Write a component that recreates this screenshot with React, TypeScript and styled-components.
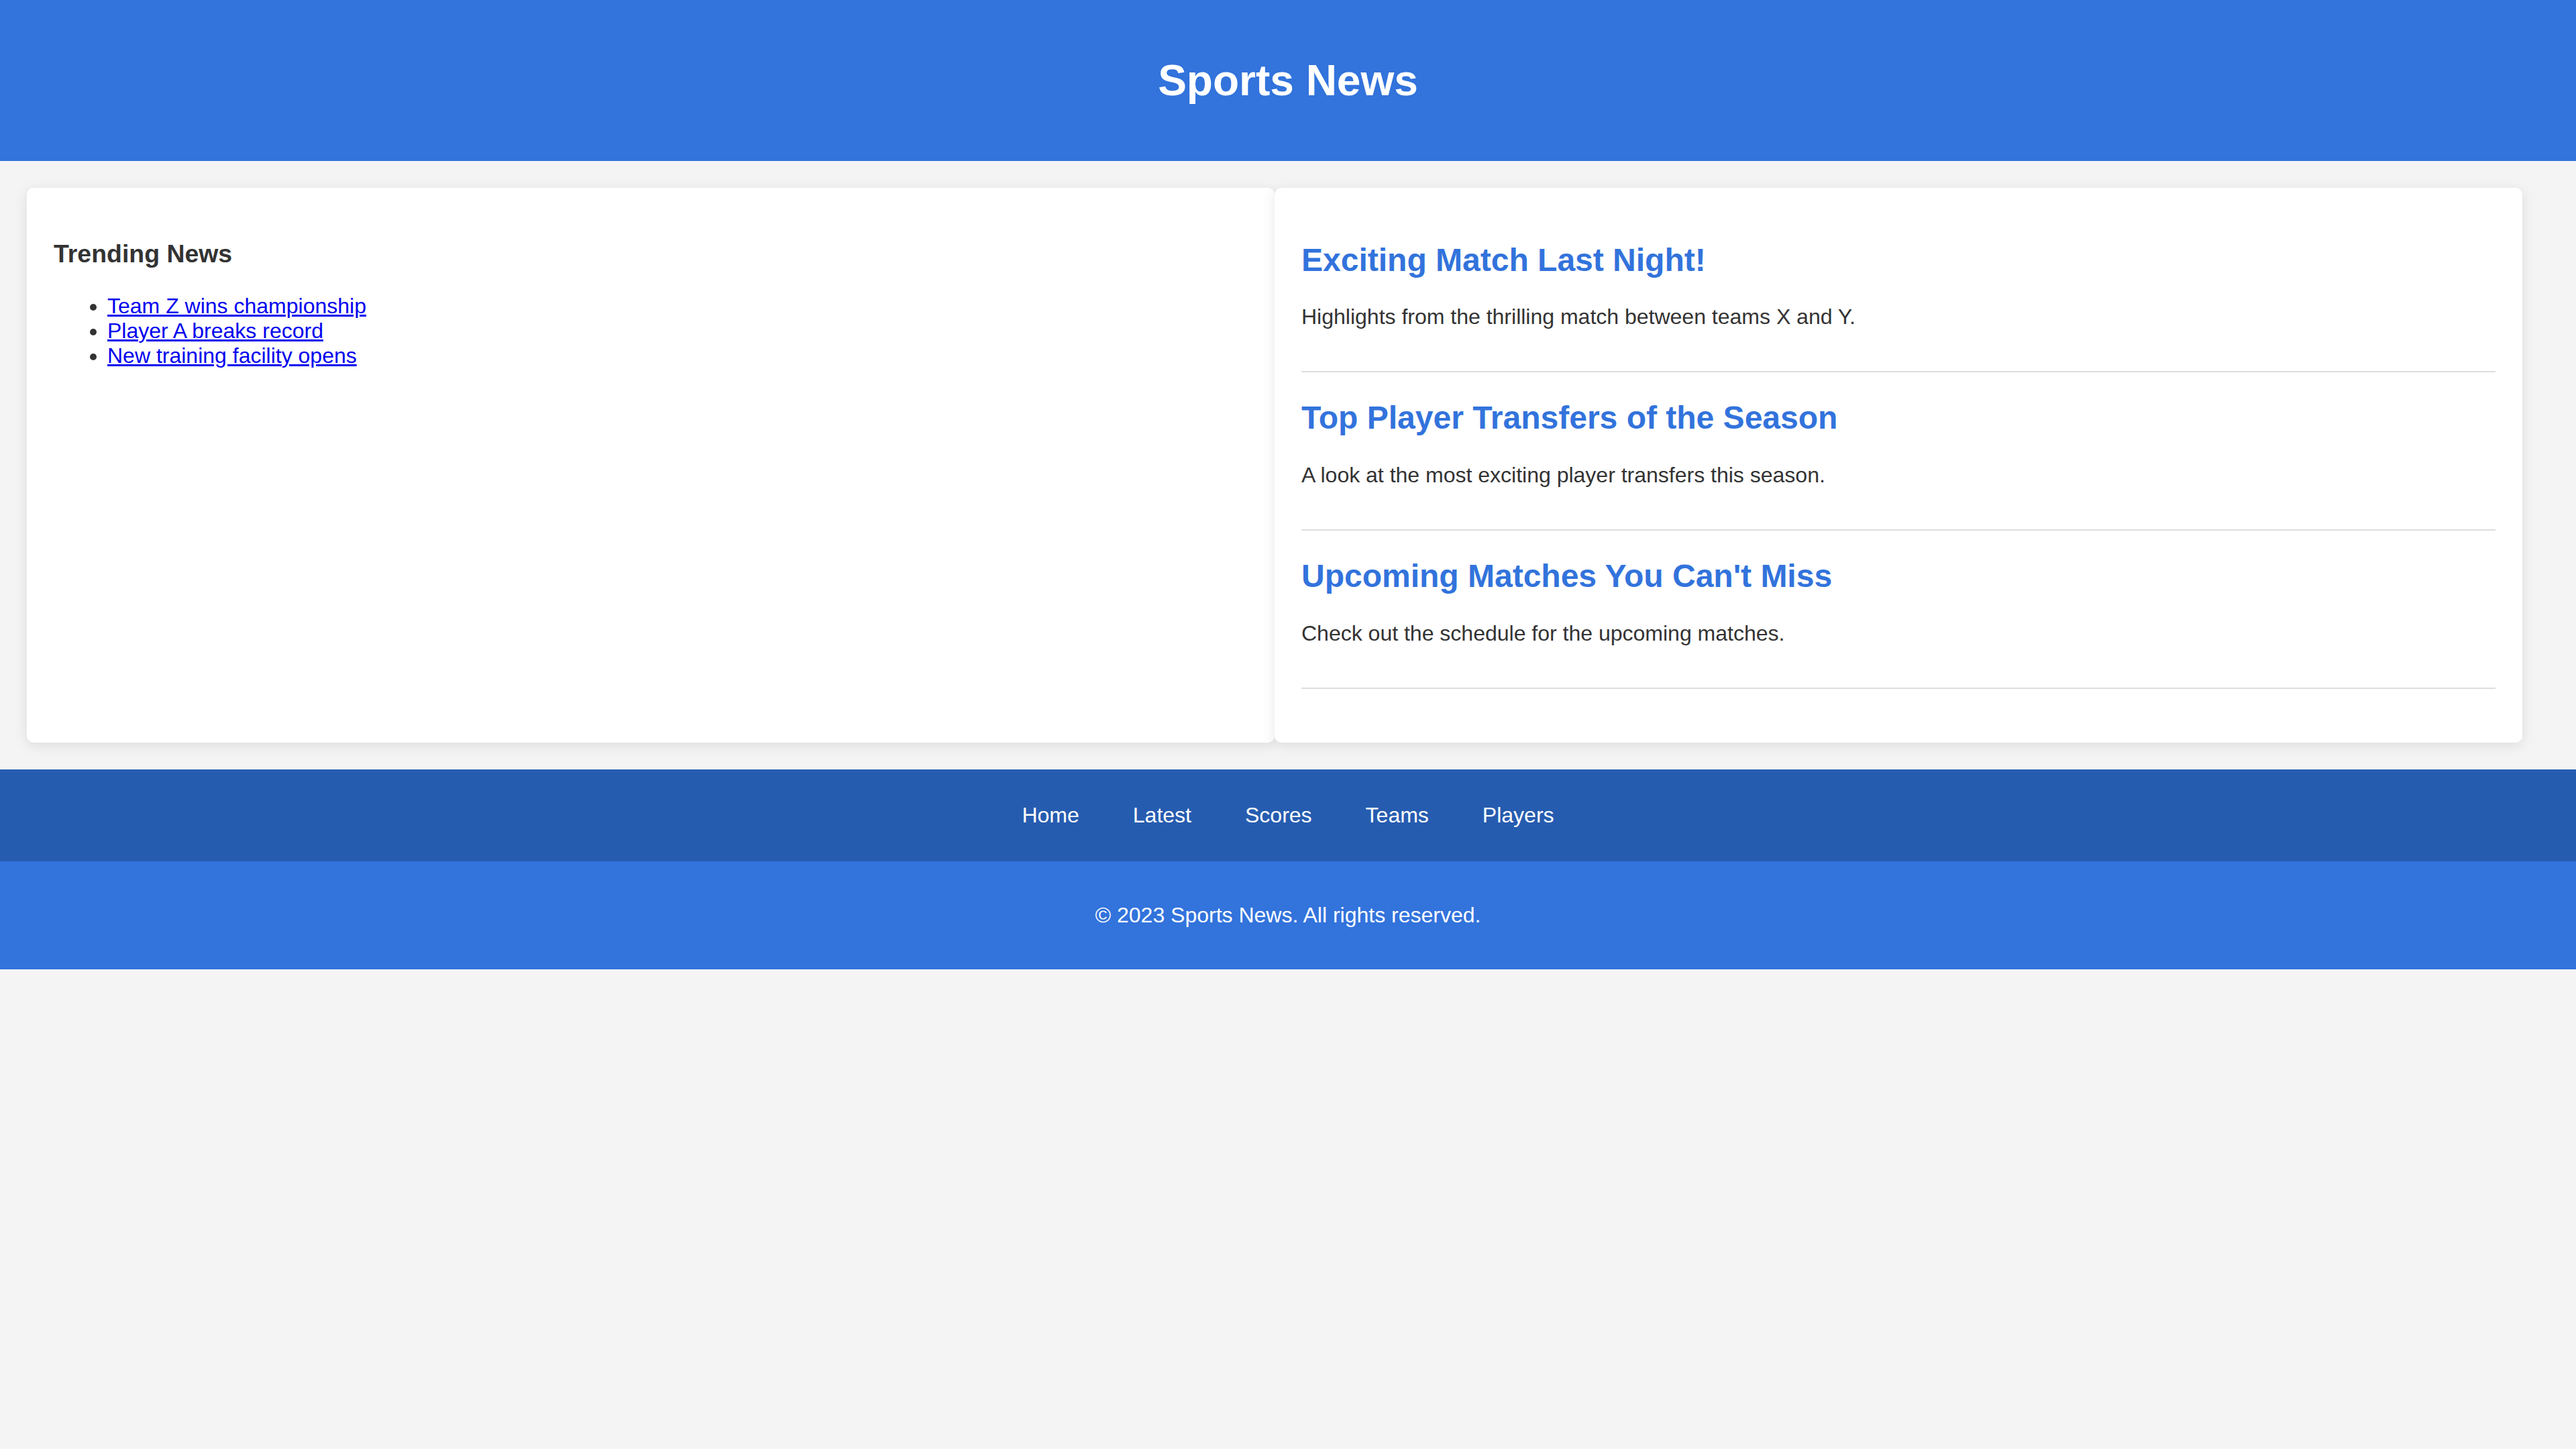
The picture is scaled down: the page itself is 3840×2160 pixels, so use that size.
import styled, { createGlobalStyle } from "styled-components"

const GlobalStyle = createGlobalStyle`
    body {
        margin: 0;
        background: #f4f4f4;
        color: #333;
        font-family: "Liberation Sans", Arial, sans-serif;
        font-size: 32px;
    }
`;

const Header = styled.header`
    background: #3273dc;
    color: #fff;
    text-align: center;
    padding: 40px 0;

    h1 {
        font-size: 64px;
        margin: 42.88px 0;
    }
`;

const Main = styled.main`
    display: flex;
    align-items: stretch;
    padding: 40px;
`;

const Card = styled.section`
    width: calc(50% - 20px);
    box-sizing: border-box;
    padding: 40px;
    background: #fff;
    border-radius: 10px;
    box-shadow: 0 4px 20px rgba(0, 0, 0, 0.1);
`;

const SideTitle = styled.h3`
    font-size: 37.44px;
    margin: 37.44px 0;
    color: #333;
`;

const TrendList = styled.ul`
    margin: 32px 0;
    padding-left: 80px;

    a {
        color: #0000ee;
        text-decoration: underline;
    }
`;

const Article = styled.article`
    margin-bottom: 40px;
    padding-bottom: 30px;
    border-bottom: 2px solid #ddd;

    h2 {
        color: #3273dc;
        font-size: 48px;
        margin: 39.84px 0;
    }

    p {
        margin: 32px 0;
    }
`;

const Nav = styled.nav`
    background: #265cb0;
    display: flex;
    justify-content: center;
    padding: 50px 0;

    a {
        color: #fff;
        text-decoration: none;
        margin: 0 40px;
    }
`;

const Footer = styled.footer`
    background: #3273dc;
    color: #fff;
    text-align: center;
    padding: 30px 0;

    p {
        margin: 32px 0;
    }
`;

const trending = ["Team Z wins championship", "Player A breaks record", "New training facility opens"];

const articles = [
    { title: "Exciting Match Last Night!", text: "Highlights from the thrilling match between teams X and Y." },
    { title: "Top Player Transfers of the Season", text: "A look at the most exciting player transfers this season." },
    { title: "Upcoming Matches You Can't Miss", text: "Check out the schedule for the upcoming matches." },
];

const links = ["Home", "Latest", "Scores", "Teams", "Players"];

const App = () => {
    return (<>
        <GlobalStyle />
        <Header>
            <h1>Sports News</h1>
        </Header>
        <Main>
            <Card as="aside">
                <SideTitle>Trending News</SideTitle>
                <TrendList>
                    {trending.map((item, i) => (<li key={i}><a href="#">{item}</a></li>))}
                </TrendList>
            </Card>
            <Card>
                {articles.map((a, i) => (
                    <Article key={i}>
                        <h2>{a.title}</h2>
                        <p>{a.text}</p>
                    </Article>
                ))}
            </Card>
        </Main>
        <Nav>
            {links.map((l, i) => (<a key={i} href="#">{l}</a>))}
        </Nav>
        <Footer>
            <p>&copy; 2023 Sports News. All rights reserved.</p>
        </Footer>
    </>)
}
export default App
